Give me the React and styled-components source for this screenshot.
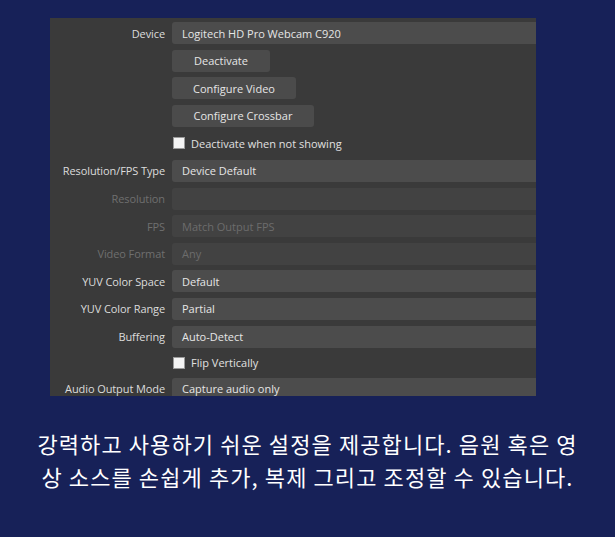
import React from 'react'
import styled, { createGlobalStyle } from 'styled-components'

const GlobalStyle = createGlobalStyle`
  html, body {
    margin: 0;
    padding: 0;
    background: #172158;
  }
  body {
    font-family: "Open Sans", "Noto Sans", sans-serif;
  }
`

const Page = styled.div`
  width: 615px;
  height: 537px;
  padding-top: 18px;
  box-sizing: border-box;
  overflow: hidden;
`

const Panel = styled.div`
  margin-left: 50px;
  width: 486px;
  height: 378px;
  background: #3a3a3a;
  overflow: hidden;
  padding-top: 4px;
  box-sizing: border-box;
  display: flex;
  flex-direction: column;
  gap: 5.6px;
`

const Row = styled.div`
  display: grid;
  grid-template-columns: 115px 1fr;
  column-gap: 7px;
  align-items: center;
  height: ${p => p.$h || 22}px;
  flex-shrink: 0;
`

const Label = styled.div`
  text-align: right;
  font-size: 11px;
  color: ${p => (p.$disabled ? '#6f6f6f' : '#dcdcdc')};
  white-space: nowrap;
  letter-spacing: -0.1px;
`

const Field = styled.div`
  height: 22px;
  background: ${p => (p.$disabled ? '#424242' : '#4c4c4c')};
  border-radius: 3px 0 0 3px;
  display: flex;
  align-items: center;
  padding-left: 10px;
  font-size: 11px;
  color: ${p => (p.$disabled ? '#6c6c6c' : '#e6e6e6')};
  white-space: nowrap;
`

const Button = styled.div`
  justify-self: start;
  width: ${p => p.$w}px;
  height: 22px;
  background: #4b4b4b;
  border-radius: 3px;
  display: flex;
  align-items: center;
  justify-content: center;
  font-size: 11px;
  color: #e6e6e6;
  white-space: nowrap;
`

const Check = styled.label`
  display: flex;
  align-items: center;
  gap: 6px;
  padding-left: 1px;
  font-size: 11px;
  color: #e0e0e0;
`

const Box = styled.span`
  width: 12px;
  height: 12px;
  background: #f4f4f4;
  border: 1px solid #9a9a9a;
  box-sizing: border-box;
`

const Caption = styled.p`
  margin: 31px 0 0;
  text-align: center;
  font-family: "Noto Sans CJK KR", "Noto Sans", sans-serif;
  font-size: 22px;
  letter-spacing: 1.1px;
  line-height: 33px;
  color: #ffffff;
`

const fields = [
  { label: 'Resolution/FPS Type', value: 'Device Default' },
  { label: 'Resolution', value: '', disabled: true },
  { label: 'FPS', value: 'Match Output FPS', disabled: true },
  { label: 'Video Format', value: 'Any', disabled: true },
  { label: 'YUV Color Space', value: 'Default' },
  { label: 'YUV Color Range', value: 'Partial' },
  { label: 'Buffering', value: 'Auto-Detect' },
]

const App = () => {
  return (
    <Page>
      <GlobalStyle />
      <Panel>
        <Row>
          <Label>Device</Label>
          <Field>Logitech HD Pro Webcam C920</Field>
        </Row>
        <Row>
          <span />
          <Button $w={98}>Deactivate</Button>
        </Row>
        <Row>
          <span />
          <Button $w={124}>Configure Video</Button>
        </Row>
        <Row>
          <span />
          <Button $w={142}>Configure Crossbar</Button>
        </Row>
        <Row>
          <span />
          <Check><Box />Deactivate when not showing</Check>
        </Row>
        {fields.map(f => (
          <Row key={f.label}>
            <Label $disabled={f.disabled}>{f.label}</Label>
            <Field $disabled={f.disabled}>{f.value}</Field>
          </Row>
        ))}
        <Row $h={19}>
          <span />
          <Check><Box />Flip Vertically</Check>
        </Row>
        <Row>
          <Label>Audio Output Mode</Label>
          <Field>Capture audio only</Field>
        </Row>
      </Panel>
      <Caption>
        강력하고 사용하기 쉬운 설정을 제공합니다. 음원 혹은 영<br />
        상 소스를 손쉽게 추가, 복제 그리고 조정할 수 있습니다.
      </Caption>
    </Page>
  )
}

export default App
